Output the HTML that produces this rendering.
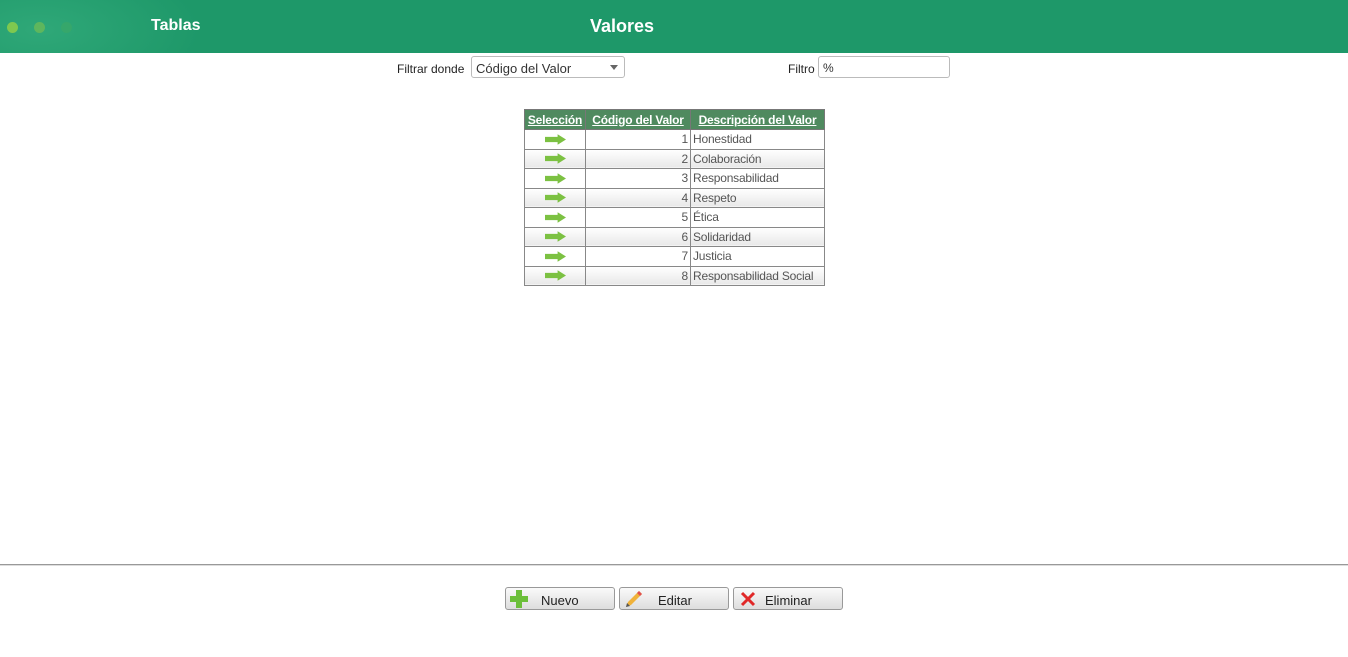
<!DOCTYPE html>
<html><head><style>
body{margin:0;width:1348px;height:657px;background:#fff;font-family:"Liberation Sans",sans-serif;position:relative;overflow:hidden}
.hdr{position:absolute;left:0;top:0;width:1348px;height:53px;background:radial-gradient(ellipse 160px 70px at 40px 30px,#2fa878 0,#1e9869 100%)}
.dot{position:absolute;top:22px;width:11px;height:11px;border-radius:50%}
.t{position:absolute;color:#fff;font-weight:bold;font-size:16px;top:17px}
.lbl{position:absolute;font-size:12px;color:#222;top:62px}
.inp{position:absolute;top:56px;height:22px;border:1px solid #bbb;border-radius:3px;box-sizing:border-box;font-size:13px;color:#333;padding:4px 4px}
table{position:absolute;left:524px;top:109px;border-collapse:collapse;font-size:12px;table-layout:fixed;width:300px;letter-spacing:-0.2px}
th{background:#4f8a5f;color:#fff;text-decoration:underline;font-weight:bold;height:19px;padding:0 1px;border:1px solid #777;white-space:nowrap;overflow:hidden;font-size:12px}
td{border:1px solid #888;height:18.5px;padding:0 2px;color:#555;white-space:nowrap;overflow:hidden}
tr:nth-child(odd) td{background:linear-gradient(#fff,#e8e8e8)}
.arr{display:block;margin:0 auto;width:21px;height:11px}
.btn{position:absolute;top:587px;width:110px;height:23px;border:1px solid #999;border-radius:3px;box-sizing:border-box;background:linear-gradient(#fafafa,#ddd);font-size:13px;color:#222}
.btn span{position:absolute;top:5px}
</style></head><body>
<div class="hdr">
<div class="dot" style="left:7px;background:#7ec84f"></div>
<div class="dot" style="left:34px;background:#64b85a;opacity:.9"></div>
<div class="dot" style="left:61px;background:#3aa866;opacity:.7"></div>
<div class="t" style="left:151px">Tablas</div>
<div class="t" style="left:590px;font-size:18px;top:16px">Valores</div>
</div>
<div class="lbl" style="left:397px">Filtrar donde</div>
<div class="inp" style="left:471px;width:154px">Código del Valor<span style="position:absolute;right:6px;top:8px;border:4px solid transparent;border-top:5px solid #666;width:0;height:0"></span></div>
<div class="lbl" style="left:788px">Filtro</div>
<div class="inp" style="left:818px;width:132px;font-size:12px">%</div>
<table>
<colgroup><col style="width:61px"><col style="width:105px"><col style="width:134px"></colgroup>
<tr><th>Selección</th><th>Código del Valor</th><th>Descripción del Valor</th></tr>
<tr><td><svg class="arr" viewBox="0 0 20 10"><path d="M0 2.5h12V0l8 5-8 5V7.5H0z" fill="#7cc142"/></svg></td><td style="text-align:right">1</td><td>Honestidad</td></tr>
<tr><td><svg class="arr" viewBox="0 0 20 10"><path d="M0 2.5h12V0l8 5-8 5V7.5H0z" fill="#7cc142"/></svg></td><td style="text-align:right">2</td><td>Colaboración</td></tr>
<tr><td><svg class="arr" viewBox="0 0 20 10"><path d="M0 2.5h12V0l8 5-8 5V7.5H0z" fill="#7cc142"/></svg></td><td style="text-align:right">3</td><td>Responsabilidad</td></tr>
<tr><td><svg class="arr" viewBox="0 0 20 10"><path d="M0 2.5h12V0l8 5-8 5V7.5H0z" fill="#7cc142"/></svg></td><td style="text-align:right">4</td><td>Respeto</td></tr>
<tr><td><svg class="arr" viewBox="0 0 20 10"><path d="M0 2.5h12V0l8 5-8 5V7.5H0z" fill="#7cc142"/></svg></td><td style="text-align:right">5</td><td>Ética</td></tr>
<tr><td><svg class="arr" viewBox="0 0 20 10"><path d="M0 2.5h12V0l8 5-8 5V7.5H0z" fill="#7cc142"/></svg></td><td style="text-align:right">6</td><td>Solidaridad</td></tr>
<tr><td><svg class="arr" viewBox="0 0 20 10"><path d="M0 2.5h12V0l8 5-8 5V7.5H0z" fill="#7cc142"/></svg></td><td style="text-align:right">7</td><td>Justicia</td></tr>
<tr><td><svg class="arr" viewBox="0 0 20 10"><path d="M0 2.5h12V0l8 5-8 5V7.5H0z" fill="#7cc142"/></svg></td><td style="text-align:right">8</td><td>Responsabilidad Social</td></tr>
</table>
<div style="position:absolute;left:0;top:564px;width:1348px;height:1px;background:#999"></div>
<div style="position:absolute;left:0;top:565px;width:1348px;height:1px;background:#ddd"></div>
<div class="btn" style="left:505px"><svg style="position:absolute;left:4px;top:2px" width="18" height="18" viewBox="0 0 18 18"><path d="M6 0h6v6h6v6h-6v6H6v-6H0V6h6z" fill="#6cbf3a"/></svg><span style="left:35px">Nuevo</span></div>
<div class="btn" style="left:619px"><svg style="position:absolute;left:5px;top:2px" width="18" height="18" viewBox="0 0 18 18"><path d="M14 1l3 3L6 15l-5 2 2-5z" fill="#f0b23a"/><path d="M14 1l3 3-2 2-3-3z" fill="#e05050"/><path d="M1 17l1-4 3 3z" fill="#555"/></svg><span style="left:38px">Editar</span></div>
<div class="btn" style="left:733px"><svg style="position:absolute;left:6px;top:3px" width="16" height="16" viewBox="0 0 16 16"><path d="M2 2L14 14M14 2L2 14" stroke="#e02828" stroke-width="3"/></svg><span style="left:31px">Eliminar</span></div>
</body></html>
